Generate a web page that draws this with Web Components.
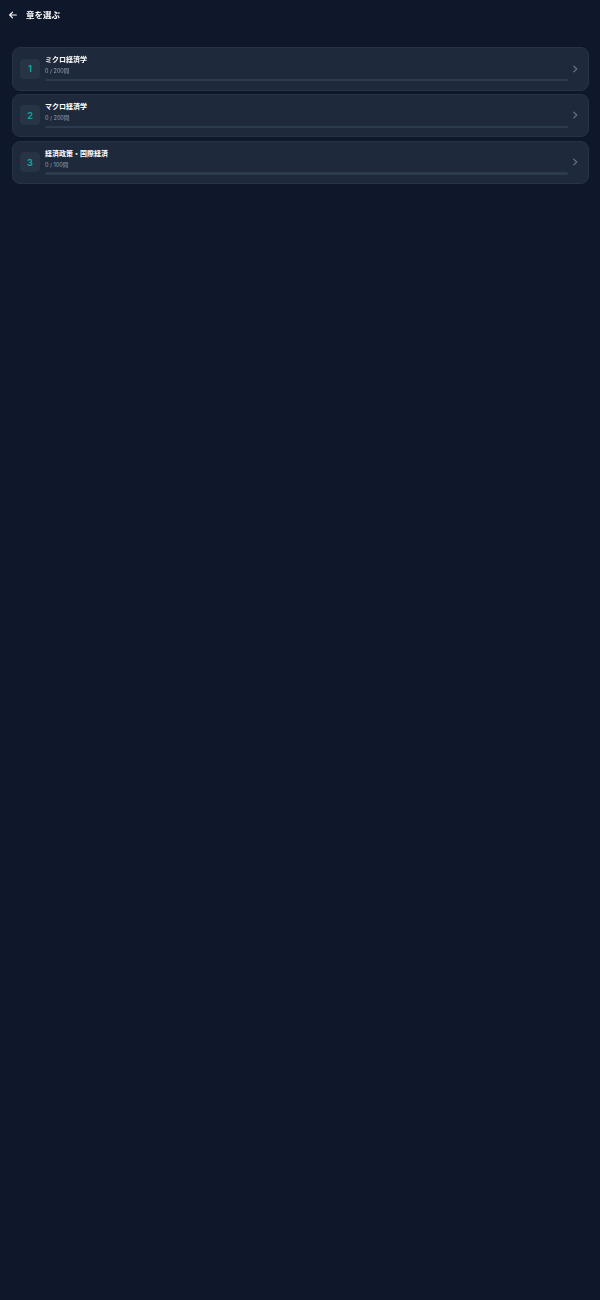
<!DOCTYPE html>
<html lang="ja">
<head>
<meta charset="utf-8">
<title>章を選ぶ</title>
<style>
html,body{margin:0;padding:0;background:#0f172a;}
body{width:600px;min-height:1300px;font-family:"Inter","Noto Sans CJK JP",sans-serif;color:#fff;}
</style>
</head>
<body>
<chapter-screen heading="章を選ぶ">
  <chapter-card num="1" name="ミクロ経済学" progress="0 / 200問"></chapter-card>
  <chapter-card num="2" name="マクロ経済学" progress="0 / 200問"></chapter-card>
  <chapter-card num="3" name="経済政策・国際経済" progress="0 / 100問"></chapter-card>
</chapter-screen>
<script>
class ChapterScreen extends HTMLElement{
  constructor(){
    super();
    const r=this.attachShadow({mode:"open"});
    r.innerHTML=`<style>
      :host{display:block;filter:blur(.45px);}
      header{display:flex;align-items:center;gap:8px;height:30px;padding:0 0 0 8px;box-sizing:border-box;}
      svg{width:10px;height:10px;display:block;}
      h1{margin:0;font:700 8.5px/1 "Inter","Noto Sans CJK JP",sans-serif;color:#fff;}
      main{display:flex;flex-direction:column;gap:3.25px;padding:17px 11.5px 0;}
    </style>
    <header>
      <svg viewBox="0 0 24 24" fill="none" stroke="#fff" stroke-width="2.6" stroke-linecap="round" stroke-linejoin="round"><path d="M20 12H4M11 5l-7 7 7 7"/></svg>
      <h1></h1>
    </header>
    <main><slot></slot></main>`;
    r.querySelector("h1").textContent=this.getAttribute("heading");
  }
}
class ChapterCard extends HTMLElement{
  constructor(){
    super();
    const r=this.attachShadow({mode:"open"});
    r.innerHTML=`<style>
      :host{display:flex;align-items:center;box-sizing:border-box;height:43.5px;padding:0 8px 0 7.5px;background:#1e293b;border:1px solid #273345;border-radius:8px;}
      .num{flex:none;width:20px;height:20px;border-radius:4px;background:#263446;color:#14a594;display:flex;align-items:center;justify-content:center;font:700 9px/1 "Inter",sans-serif;margin-top:-.5px;}
      .body{flex:1;min-width:0;margin-left:5px;display:flex;flex-direction:column;}
      .name{font:700 7px/10px "Inter","Noto Sans CJK JP",sans-serif;color:#fff;margin-top:-1px;}
      .sub{font:400 5.5px/8px "Inter","Noto Sans CJK JP",sans-serif;color:#94a3b8;margin-top:2px;}
      .bar{height:2.5px;border-radius:2px;background:#2c3a4d;margin-top:3.5px;}
      svg{flex:none;width:10px;height:10px;margin-left:2px;margin-right:-.5px;margin-top:-.5px;display:block;}
    </style>
    <div class="num"></div>
    <div class="body"><div class="name"></div><div class="sub"></div><div class="bar"></div></div>
    <svg viewBox="0 0 24 24" fill="none" stroke="#64748b" stroke-width="3" stroke-linecap="round" stroke-linejoin="round"><path d="M9 5l7 7-7 7"/></svg>`;
    r.querySelector(".num").textContent=this.getAttribute("num");
    r.querySelector(".name").textContent=this.getAttribute("name");
    r.querySelector(".sub").textContent=this.getAttribute("progress");
  }
}
customElements.define("chapter-screen",ChapterScreen);
customElements.define("chapter-card",ChapterCard);
</script>
</body>
</html>
